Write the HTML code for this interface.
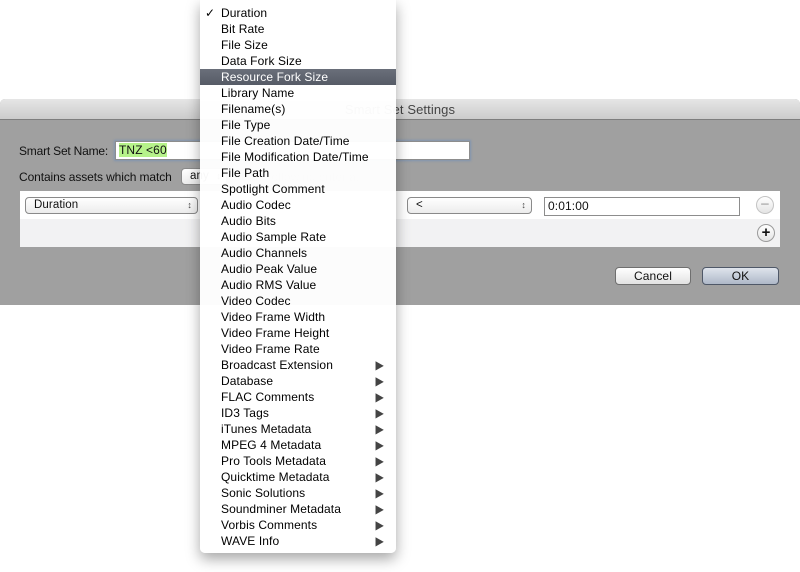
<!DOCTYPE html>
<html><head><style>
*{margin:0;padding:0;box-sizing:border-box}
body{width:800px;height:572px;background:#fff;position:relative;overflow:hidden;font-family:"Liberation Sans",sans-serif;font-size:12px;color:#111;letter-spacing:0.1px}
.a{position:absolute}
#dlg{left:0;top:99px;width:800px;height:206px;background:#a0a0a0;border-radius:5px 5px 0 0}
#tb{left:0;top:0;width:800px;height:21px;background:linear-gradient(#e6e6e6,#cbcbcb);border-bottom:1px solid #7d7d7d;border-radius:5px 5px 0 0;text-align:center;line-height:21px;font-size:13px;color:#444}
.pop{background:linear-gradient(#fff,#ececec);border:1px solid #8a8a8a;border-radius:4px;height:17px;line-height:15px;padding-left:8px;font-size:11.5px}
.pop:after{content:"\2195";position:absolute;right:5px;top:0;font-size:9px;color:#444}
.fld{background:#fff;border:1px solid #8d8d8d;height:19px;line-height:17px;padding-left:3px}
.circ{width:18px;height:18px;border-radius:50%;border:1px solid #9a9a9a;background:linear-gradient(#fff,#e4e4e4);text-align:center;line-height:15px;font-size:15px;font-weight:bold}
.btn{height:18px;border:1px solid #6f6f6f;border-radius:4px;background:linear-gradient(#fff,#e2e2e2);text-align:center;line-height:16px;font-size:12px}
#menu{left:200px;top:0;width:196px;height:553px;background:rgba(255,255,255,0.97);border-radius:0 0 5px 5px;box-shadow:0 6px 14px rgba(0,0,0,0.35)}
.it{position:absolute;left:0;width:196px;height:16px;line-height:16px;padding-left:21px;color:#000}
.it.h{background:linear-gradient(#6a6f7a,#565b66);color:#fff}
.ar{position:absolute;right:12px;top:0;font-size:12px;color:#444;transform:scaleX(0.9)}
</style></head><body>
<div id="dlg" class="a">
 <div id="tb" class="a">Smart Set Settings</div>
 <div class="a" style="left:19px;top:45px;letter-spacing:-0.2px">Smart Set Name:</div>
 <div class="a fld" style="left:115px;top:42px;width:355px;box-shadow:0 0 2px 1px #7f94b0"><span style="background:#b6f28a">TNZ &lt;60</span></div>
 <div class="a" style="left:19px;top:71px;letter-spacing:-0.1px">Contains assets which match</div>
 <div class="a pop" style="left:181px;top:69px;width:46px">any</div>
 <div class="a" style="left:234px;top:71px;color:#888">of the following criteria:</div>
 <div class="a" style="left:20px;top:92px;width:760px;height:28px;background:#fff"></div>
 <div class="a" style="left:20px;top:120px;width:760px;height:28px;background:#f2f2f3"></div>
 <div class="a pop" style="left:25px;top:98px;width:173px">Duration</div>
 <div class="a pop" style="left:407px;top:98px;width:125px">&lt;</div>
 <div class="a fld" style="left:544px;top:98px;width:196px">0:01:00</div>
 <div class="a circ" style="left:756px;top:97px;color:#bbb;border-color:#c3c3c3">−</div>
 <div class="a circ" style="left:757px;top:125px">+</div>
 <div class="a btn" style="left:615px;top:168px;width:76px">Cancel</div>
 <div class="a btn" style="left:702px;top:168px;width:77px;background:linear-gradient(#dfe4ec,#aeb8c8);border-color:#4f5868">OK</div>
</div>
<div id="menu" class="a">
<div class="it" style="top:5px"><span style="position:absolute;left:5px">✓</span>Duration</div>
<div class="it" style="top:21px">Bit Rate</div>
<div class="it" style="top:37px">File Size</div>
<div class="it" style="top:53px">Data Fork Size</div>
<div class="it h" style="top:69px">Resource Fork Size</div>
<div class="it" style="top:85px">Library Name</div>
<div class="it" style="top:101px">Filename(s)</div>
<div class="it" style="top:117px">File Type</div>
<div class="it" style="top:133px">File Creation Date/Time</div>
<div class="it" style="top:149px">File Modification Date/Time</div>
<div class="it" style="top:165px">File Path</div>
<div class="it" style="top:181px">Spotlight Comment</div>
<div class="it" style="top:197px">Audio Codec</div>
<div class="it" style="top:213px">Audio Bits</div>
<div class="it" style="top:229px">Audio Sample Rate</div>
<div class="it" style="top:245px">Audio Channels</div>
<div class="it" style="top:261px">Audio Peak Value</div>
<div class="it" style="top:277px">Audio RMS Value</div>
<div class="it" style="top:293px">Video Codec</div>
<div class="it" style="top:309px">Video Frame Width</div>
<div class="it" style="top:325px">Video Frame Height</div>
<div class="it" style="top:341px">Video Frame Rate</div>
<div class="it" style="top:357px">Broadcast Extension<span class="ar">▶</span></div>
<div class="it" style="top:373px">Database<span class="ar">▶</span></div>
<div class="it" style="top:389px">FLAC Comments<span class="ar">▶</span></div>
<div class="it" style="top:405px">ID3 Tags<span class="ar">▶</span></div>
<div class="it" style="top:421px">iTunes Metadata<span class="ar">▶</span></div>
<div class="it" style="top:437px">MPEG 4 Metadata<span class="ar">▶</span></div>
<div class="it" style="top:453px">Pro Tools Metadata<span class="ar">▶</span></div>
<div class="it" style="top:469px">Quicktime Metadata<span class="ar">▶</span></div>
<div class="it" style="top:485px">Sonic Solutions<span class="ar">▶</span></div>
<div class="it" style="top:501px">Soundminer Metadata<span class="ar">▶</span></div>
<div class="it" style="top:517px">Vorbis Comments<span class="ar">▶</span></div>
<div class="it" style="top:533px">WAVE Info<span class="ar">▶</span></div>
</div>
</body></html>
